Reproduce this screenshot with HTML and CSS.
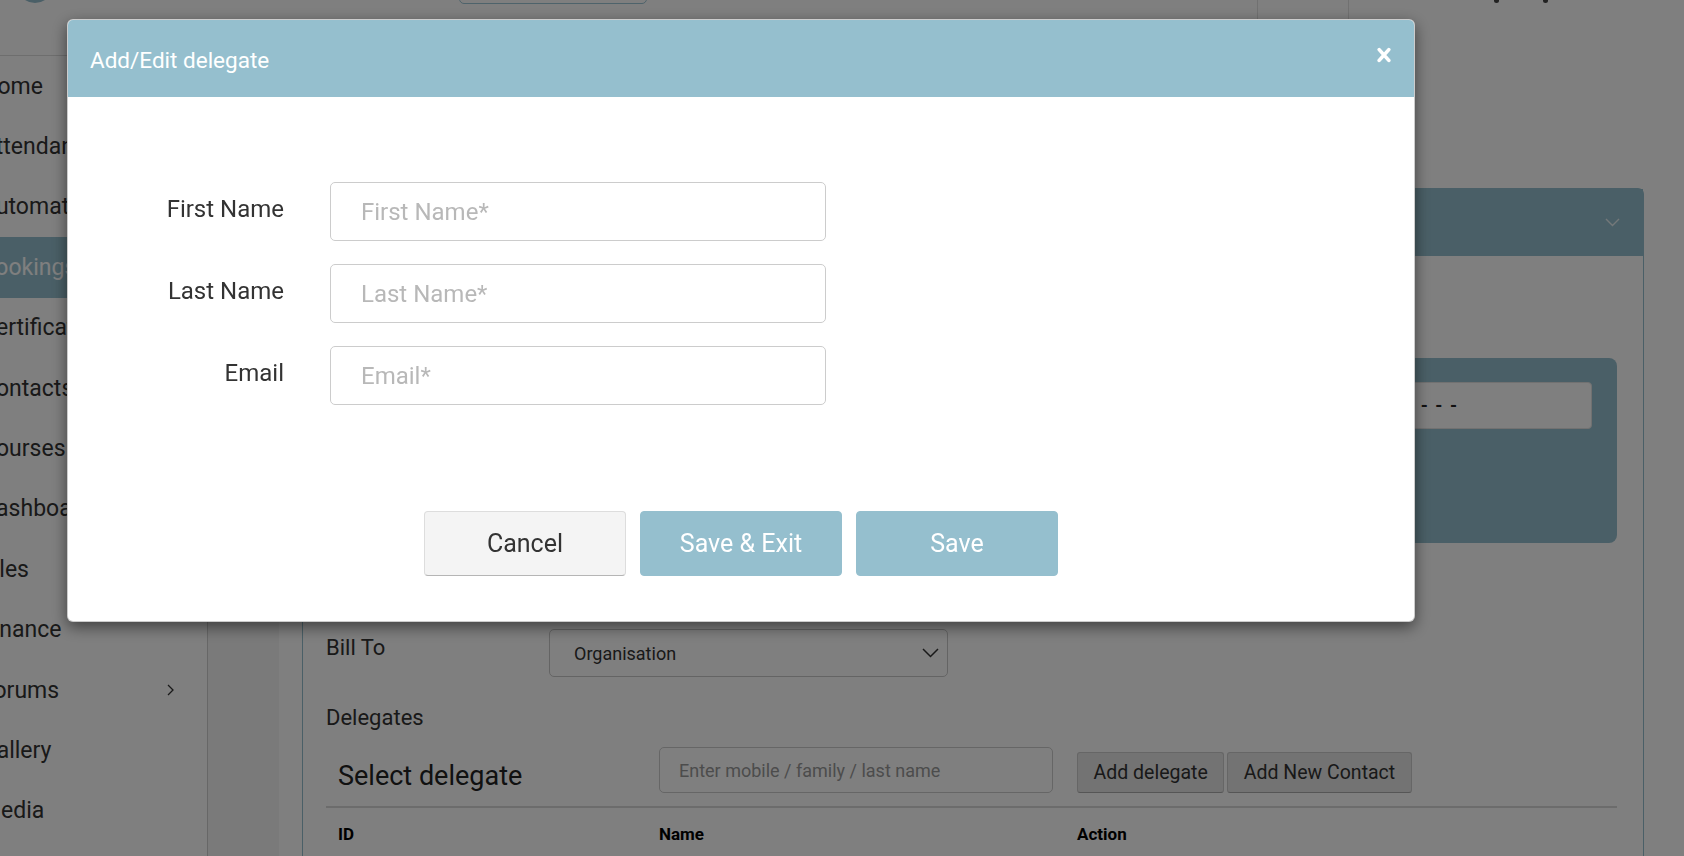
FILE: index.html
```html
<!DOCTYPE html>
<html lang="en">
<head>
    <meta charset="UTF-8">
    <meta name="viewport" content="width=device-width, initial-scale=1.0">
    <title>Bookings - Add/Edit delegate</title>
    <link rel="stylesheet" href="styles.css">
</head>
<body>

    <!-- Top bar -->
    <header class="topbar">
        <span class="logo"></span>
        <span class="top-search"></span>
        <div class="top-right">
            <span class="top-cell"></span>
            <span class="top-cell top-user">
                <i class="dot"></i>
                <i class="dot"></i>
            </span>
        </div>
    </header>

    <div class="layout">
        <!-- Sidebar -->
        <aside class="sidebar">
            <ul class="nav">
                <li>Home</li>
                <li>Attendance</li>
                <li>Automation</li>
                <li class="active">Bookings</li>
                <li>Certificates</li>
                <li>Contacts</li>
                <li>Courses</li>
                <li>Dashboard</li>
                <li>Files</li>
                <li>Finance</li>
                <li>Forums
                    <svg class="nav-arrow" width="7" height="12" viewBox="0 0 7 12"><polyline points="1,1 6,6 1,11" fill="none" stroke="#333" stroke-width="1.3"/></svg>
                </li>
                <li>Gallery</li>
                <li>Media</li>
            </ul>
        </aside>

        <!-- Page content -->
        <main class="content">
            <div class="container">
                <section class="card">
                    <div class="card-head">
                        <svg width="15" height="9" viewBox="0 0 15 9"><polyline points="1,1 7.5,7.5 14,1" fill="none" stroke="#e9f1f4" stroke-width="1.4"/></svg>
                    </div>
                    <div class="card-body">
                        <div class="panel">
                            <div class="panel-input">- - - - - - - - - - - - - - -</div>
                        </div>

                        <div class="form-row">
                            <label>Bill To</label>
                            <div class="select">
                                <span>Organisation</span>
                                <svg width="17" height="10" viewBox="0 0 17 10"><polyline points="1,1 8.5,8.5 16,1" fill="none" stroke="#333" stroke-width="1.5"/></svg>
                            </div>
                        </div>

                        <h4 class="section-title">Delegates</h4>

                        <div class="delegate-bar">
                            <h3 class="sel-title">Select delegate</h3>
                            <input type="text" class="search" placeholder="Enter mobile / family / last name">
                            <button class="btn-small">Add delegate</button>
                            <button class="btn-small">Add New Contact</button>
                        </div>

                        <div class="table-head">
                            <span>ID</span>
                            <span>Name</span>
                            <span>Action</span>
                        </div>
                    </div>
                </section>
            </div>
        </main>
    </div>

    <!-- Modal -->
    <div class="backdrop"></div>
    <div class="modal">
        <div class="modal-header">
            <h4 class="modal-title">Add/Edit delegate</h4>
            <svg class="modal-close" width="14" height="16" viewBox="0 0 14 16">
                <path d="M2.2 2.6 L11.8 13.4 M11.8 2.6 L2.2 13.4" stroke="#fff" stroke-width="3.6" stroke-linecap="round"/>
            </svg>
        </div>
        <div class="modal-body">
            <div class="field">
                <label>First Name</label>
                <input type="text" placeholder="First Name*">
            </div>
            <div class="field">
                <label>Last Name</label>
                <input type="text" placeholder="Last Name*">
            </div>
            <div class="field">
                <label>Email</label>
                <input type="text" placeholder="Email*">
            </div>

            <div class="actions">
                <button class="btn btn-cancel">Cancel</button>
                <button class="btn btn-primary">Save &amp; Exit</button>
                <button class="btn btn-primary">Save</button>
            </div>
        </div>
    </div>

</body>
</html>
```

FILE: styles.css
```css
* {
    box-sizing: border-box;
}

html, body {
    margin: 0;
    height: 100%;
    overflow: hidden;
}

body {
    font-family: Roboto, "Liberation Sans", sans-serif;
    color: #333;
    background: #fff;
}

/* Top bar */
.topbar {
    height: 20px;
    display: flex;
    overflow: hidden;
    background: #fff;
}

.logo {
    flex: none;
    width: 36px;
    height: 36px;
    margin: -33px 0 0 17px;
    border: 4px solid #95bfce;
    border-radius: 50%;
}

.top-search {
    flex: none;
    width: 188px;
    height: 30px;
    margin: -26px 0 0 406px;
    border: 1px solid #9cc6d6;
    border-radius: 5px;
}

.top-right {
    margin-left: auto;
    display: flex;
}

.top-cell {
    width: 91px;
    border-left: 1px solid #e2e2e2;
}

.top-user {
    width: 336px;
    display: flex;
    gap: 44px;
    padding-left: 145px;
}

.dot {
    width: 5px;
    height: 3px;
    background: #444;
    border-radius: 0 0 3px 3px;
}

/* Layout */
.layout {
    display: flex;
    height: calc(100% - 20px);
}

.sidebar {
    flex: none;
    width: 208px;
    padding-top: 35px;
    border-right: 1px solid #cfcfcf;
    background: #fff;
}

.nav {
    list-style: none;
    margin: 0 0 0 -19px;
    padding: 0;
    border-top: 1px solid #dcdcdc;
}

.nav li {
    height: 60.4px;
    display: flex;
    align-items: center;
    justify-content: space-between;
    padding-right: 33px;
    font-size: 23px;
    color: #333;
}

.nav li.active {
    background: #95bfce;
    color: #fff;
}

.content {
    flex: 1;
    padding-left: 71px;
    background: #f4f4f4;
}

.container {
    height: 100%;
    padding: 168px 40px 0 23px;
    background: #fff;
}

/* Card */
.card {
    height: 100%;
    border: 1px solid #95bfce;
    border-bottom: none;
    border-radius: 6px 6px 0 0;
}

.card-head {
    height: 67px;
    display: flex;
    align-items: center;
    justify-content: flex-end;
    padding-right: 23px;
    background: #95bfce;
}

.card-body {
    padding: 102px 26px 0 23px;
}

.panel {
    height: 185px;
    display: flex;
    justify-content: flex-end;
    padding: 24px 25px;
    background: #95bfce;
    border-radius: 8px;
}

.panel-input {
    width: 600px;
    height: 47px;
    display: flex;
    align-items: center;
    justify-content: flex-end;
    padding-right: 134px;
    overflow: hidden;
    white-space: nowrap;
    word-spacing: 3px;
    font-size: 18px;
    font-weight: bold;
    color: #222;
    background: #fff;
    border: 1px solid #e2e2e2;
    border-radius: 4px;
}

.form-row {
    display: flex;
    align-items: center;
    margin-top: 86px;
}

.form-row label {
    width: 223px;
    margin-bottom: 12px;
    font-size: 22px;
}

.select {
    width: 399px;
    height: 48px;
    display: flex;
    align-items: center;
    justify-content: space-between;
    padding: 0 8px 0 24px;
    font-size: 18px;
    border: 1px solid #c9c9c9;
    border-radius: 5px;
}

.section-title {
    margin: 28px 0 0;
    font-size: 22px;
    font-weight: 400;
    line-height: 26px;
}

.delegate-bar {
    display: flex;
    align-items: flex-end;
    margin-top: 16px;
    padding-left: 12px;
}

.sel-title {
    width: 321px;
    margin: 0;
    padding-bottom: 1px;
    font-size: 27px;
    font-weight: 400;
    line-height: 32px;
    color: #222;
}

.search {
    width: 394px;
    height: 46px;
    padding: 0 19px;
    font-family: inherit;
    font-size: 18px;
    border: 1px solid #ccc;
    border-radius: 5px;
}

.search::placeholder {
    color: #999;
}

.btn-small {
    height: 41px;
    margin-left: 3px;
    padding: 0 15.5px;
    font-family: inherit;
    font-size: 19.5px;
    color: #333;
    background: #e6e6e6;
    border: 1px solid #ccc;
    border-bottom-color: #adadad;
    border-radius: 3px;
}

.search + .btn-small {
    margin-left: 24px;
}

.table-head {
    display: grid;
    grid-template-columns: 321px 418px 1fr;
    margin-top: 13px;
    padding-top: 14px;
    border-top: 2px solid #d9d9d9;
    font-size: 17px;
    font-weight: bold;
    line-height: 24px;
    color: #000;
}

.table-head span {
    padding-left: 12px;
}

/* Modal */
.backdrop {
    position: fixed;
    inset: 0;
    background: rgba(0, 0, 0, 0.5);
}

.modal {
    position: fixed;
    top: 19px;
    left: 67px;
    width: 1348px;
    overflow: hidden;
    background: #fff;
    border: 1px solid rgba(0, 0, 0, 0.2);
    border-radius: 6px;
    box-shadow: 0 5px 15px rgba(0, 0, 0, 0.5);
}

.modal-header {
    height: 77px;
    display: flex;
    align-items: center;
    justify-content: space-between;
    padding: 2px 23px 0 22px;
    color: #fff;
    background: #95bfce;
}

.modal-title {
    margin: 0;
    font-size: 22.5px;
    font-weight: 400;
}

.modal-close {
    margin-bottom: 10px;
}

.modal-body {
    padding: 85px 0 45px;
}

.field {
    display: grid;
    grid-template-columns: 216px 496px;
    column-gap: 46px;
    align-items: center;
    margin-bottom: 23px;
}

.field label {
    margin-bottom: 6px;
    text-align: right;
    font-size: 24px;
    color: #333;
}

.field input {
    height: 59px;
    padding: 0 30px;
    font-family: inherit;
    font-size: 24px;
    color: #333;
    border: 1px solid #ccc;
    border-radius: 5px;
}

.field input::placeholder {
    color: #b8b8b8;
}

.actions {
    display: flex;
    justify-content: center;
    gap: 14px;
    margin-top: 106px;
}

.btn {
    width: 202px;
    height: 65px;
    font-family: inherit;
    font-size: 25px;
    border-radius: 4px;
}

.btn-cancel {
    color: #333;
    background: #f4f4f4;
    border: 1px solid #ddd;
    border-bottom-color: #b5b5b5;
}

.btn-primary {
    color: #fff;
    background: #95bfce;
    border: 1px solid #95bfce;
}
```
